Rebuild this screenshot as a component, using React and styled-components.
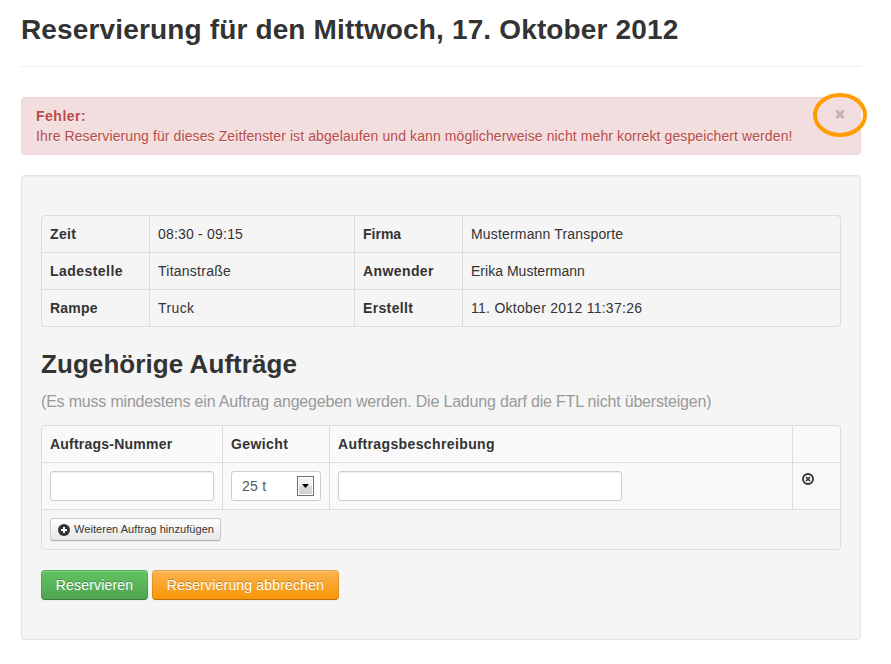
import React from "react";
import styled, { createGlobalStyle, css } from "styled-components";

const GlobalStyle = createGlobalStyle`
  * { box-sizing: border-box; }
  body {
    margin: 0;
    background: #fff;
    color: #333;
    font: 14px/20px "Liberation Sans", Arial, sans-serif;
  }
`;

const Page = styled.main`
  width: 840px;
  margin-left: 21px;
  padding-top: 10px;
`;

const PageHeader = styled.header`
  height: 57px;
  border-bottom: 1px solid #eee;
  margin-bottom: 30px;
`;

const Title = styled.h1`
  margin: 0;
  font-size: 28px;
  line-height: 40px;
  white-space: nowrap;
  letter-spacing: 0.15px;
`;

const Subtitle = styled.h2`
  margin: 17px 0 0;
  font-size: 26px;
  line-height: 40px;
  letter-spacing: 0.07px;
`;

const Hint = styled.p`
  margin: 8px 0 13px;
  font-size: 16px;
  line-height: 20px;
  color: #999;
  white-space: nowrap;
  letter-spacing: -0.19px;
`;

const Text = styled.span`
  letter-spacing: ${(p) => p.$spacing || 0}px;
`;

const Alert = styled.section`
  position: relative;
  height: 58px;
  padding: 8px 14px;
  margin-bottom: 20px;
  color: #b94a48;
  background: #f2dede;
  border: 1px solid #eed3d7;
  border-radius: 4px;
  text-shadow: 0 1px 0 rgba(255, 255, 255, 0.5);
  white-space: nowrap;
`;

const AlertTitle = styled.strong`
  display: block;
  letter-spacing: 0.5px;
`;

const CloseMark = styled.svg`
  position: absolute;
  top: -5px;
  right: -7px;
  display: block;
`;

const Well = styled.section`
  height: 465px;
  padding: 39px 19px 0;
  background: #f5f5f5;
  border: 1px solid #e3e3e3;
  border-radius: 4px;
  box-shadow: inset 0 1px 1px rgba(0, 0, 0, 0.05);
`;

const Table = styled.table`
  width: 800px;
  table-layout: fixed;
  border: 1px solid #ddd;
  border-left: 0;
  border-collapse: separate;
  border-spacing: 0;
  border-radius: 4px;
`;

const cell = css`
  height: ${(p) => p.$height || 37}px;
  padding: ${(p) => p.$pad || "8px"};
  border-left: 1px solid #ddd;
  border-top: 1px solid #ddd;
  background: ${(p) => (p.$shaded ? "#f9f9f9" : "transparent")};
  text-align: left;
  vertical-align: top;
  white-space: nowrap;
  tr:first-child > & {
    height: 36px;
    border-top: 0;
  }
  tr:first-child > &:first-child { border-top-left-radius: 4px; }
  tr:first-child > &:last-child { border-top-right-radius: 4px; }
  tr:last-child > &:first-child { border-bottom-left-radius: 4px; }
`;

const HeadCell = styled.th`${cell}`;
const Cell = styled.td`${cell}`;

const Input = styled.input`
  display: block;
  width: ${(p) => p.$width}px;
  height: 30px;
  padding: 4px 6px;
  border: 1px solid #ccc;
  border-radius: 3px;
  background: #fff;
  box-shadow: inset 0 1px 1px rgba(0, 0, 0, 0.075);
`;

const Select = styled.div`
  display: flex;
  align-items: center;
  justify-content: space-between;
  width: 90px;
  height: 30px;
  padding: 0 6px 0 10px;
  color: #555;
  background: #fff;
  border: 1px solid #ccc;
  border-radius: 3px;
`;

const SelectArrow = styled.span`
  display: flex;
  align-items: center;
  justify-content: center;
  width: 17px;
  height: 20px;
  border: 1px solid #707070;
  box-shadow: inset 0 0 0 1px #fff;
  background: linear-gradient(#f2f2f2 50%, #dcdcdc 50%, #cfcfcf);
`;

const AddButton = styled.button`
  display: flex;
  align-items: center;
  gap: 4px;
  width: 171px;
  height: 23px;
  padding: 0 0 0 7px;
  font: 11px/16px "Liberation Sans", Arial, sans-serif;
  color: #333;
  white-space: nowrap;
  text-shadow: 0 1px 1px rgba(255, 255, 255, 0.75);
  border: 1px solid #ccc;
  border-bottom-color: #b3b3b3;
  border-radius: 3px;
  background: linear-gradient(#fff, #e6e6e6);
  box-shadow: 0 1px 2px rgba(0, 0, 0, 0.05);
`;

const AddLabel = styled.span`
  margin-top: -2px;
  letter-spacing: 0.05px;
`;

const Icon = styled.svg`
  display: block;
  flex: none;
`;

const Actions = styled.div`
  display: flex;
  gap: 4px;
  margin-top: 20px;
`;

const tones = {
  success: "linear-gradient(#62c462, #51a351)",
  warning: "linear-gradient(#fbb450, #f89406)",
};

const ActionButton = styled.button`
  width: ${(p) => p.$width}px;
  height: 30px;
  padding: 0;
  font: 14px/20px "Liberation Sans", Arial, sans-serif;
  letter-spacing: 0.18px;
  color: #fff;
  text-shadow: 0 -1px 0 rgba(0, 0, 0, 0.25);
  background: ${(p) => tones[p.$tone]} border-box;
  border: 1px solid;
  border-color: rgba(0, 0, 0, 0.1) rgba(0, 0, 0, 0.1) rgba(0, 0, 0, 0.25);
  border-radius: 4px;
  box-shadow: inset 0 1px 0 rgba(255, 255, 255, 0.2), 0 1px 2px rgba(0, 0, 0, 0.05);
`;

/* Each entry is a text and its tracking in pixels. */
const details = [
  [["Zeit", 0.35], ["08:30 - 09:15", 0.2], ["Firma", 0], ["Mustermann Transporte", 0.17]],
  [["Ladestelle", 0.45], ["Titanstraße", 0.25], ["Anwender", 0.4], ["Erika Mustermann", 0.02]],
  [["Rampe", 0.2], ["Truck", 0.4], ["Erstellt", 0.35], ["11. Oktober 2012 11:37:26", 0.27]],
];

const orderColumns = [
  ["Auftrags-Nummer", 0.22],
  ["Gewicht", 0.4],
  ["Auftragsbeschreibung", 0.38],
  ["", 0],
];

export default function App() {
  return (
    <Page>
      <GlobalStyle />
      <PageHeader>
        <Title>Reservierung für den Mittwoch, 17. Oktober 2012</Title>
      </PageHeader>
      <Alert>
        <AlertTitle>Fehler:</AlertTitle>
        <Text $spacing={0.1}>
          Ihre Reservierung für dieses Zeitfenster ist abgelaufen und kann möglicherweise nicht mehr korrekt gespeichert werden!
        </Text>
        <CloseMark width="54" height="44" viewBox="0 0 54 44">
          <ellipse cx="27" cy="22" rx="25" ry="20" fill="none" stroke="#ff9c00" strokeWidth="4" />
          <path d="M23.3 17.6l7.4 7.4M30.7 17.6l-7.4 7.4" stroke="#c2b2b2" strokeWidth="2.9" />
        </CloseMark>
      </Alert>
      <Well>
        <Table>
          <colgroup>
            <col width="108" /><col width="205" /><col width="108" /><col />
          </colgroup>
          <tbody>
            {details.map((row) => (
              <tr key={row[0][0]}>
                {row.map(([value, spacing], i) => {
                  const Kind = i % 2 ? Cell : HeadCell;
                  return <Kind key={i}><Text $spacing={spacing}>{value}</Text></Kind>;
                })}
              </tr>
            ))}
          </tbody>
        </Table>
        <Subtitle>Zugehörige Aufträge</Subtitle>
        <Hint>(Es muss mindestens ein Auftrag angegeben werden. Die Ladung darf die FTL nicht übersteigen)</Hint>
        <Table>
          <colgroup>
            <col width="181" /><col width="107" /><col width="463" /><col />
          </colgroup>
          <tbody>
            <tr>
              {orderColumns.map(([label, spacing]) => (
                <HeadCell $shaded key={label}><Text $spacing={spacing}>{label}</Text></HeadCell>
              ))}
            </tr>
            <tr>
              <Cell $shaded $height={47}><Input $width={164} /></Cell>
              <Cell $shaded $height={47}>
                <Select>
                  <Text $spacing={0.3}>25 t</Text>
                  <SelectArrow>
                    <Icon width="7" height="4" viewBox="0 0 7 4"><path d="M0 0h7L3.5 4z" fill="#000" /></Icon>
                  </SelectArrow>
                </Select>
              </Cell>
              <Cell $shaded $height={47}><Input $width={284} /></Cell>
              <Cell $shaded $height={47} $pad="10px 9px">
                <Icon width="12" height="12" viewBox="0 0 12 12" fill="none" stroke="#333">
                  <circle cx="6" cy="6" r="5" strokeWidth="1.9" />
                  <path d="M4 4l4 4M8 4L4 8" strokeWidth="1.7" />
                </Icon>
              </Cell>
            </tr>
            <tr>
              <Cell colSpan="4" $height={40}>
                <AddButton>
                  <Icon width="12" height="12" viewBox="0 0 12 12">
                    <circle cx="6" cy="6" r="6" fill="#333" />
                    <path d="M6 3v6M3 6h6" stroke="#fff" strokeWidth="2" />
                  </Icon>
                  <AddLabel>Weiteren Auftrag hinzufügen</AddLabel>
                </AddButton>
              </Cell>
            </tr>
          </tbody>
        </Table>
        <Actions>
          <ActionButton $tone="success" $width={107}>Reservieren</ActionButton>
          <ActionButton $tone="warning" $width={187}>Reservierung abbrechen</ActionButton>
        </Actions>
      </Well>
    </Page>
  );
}
